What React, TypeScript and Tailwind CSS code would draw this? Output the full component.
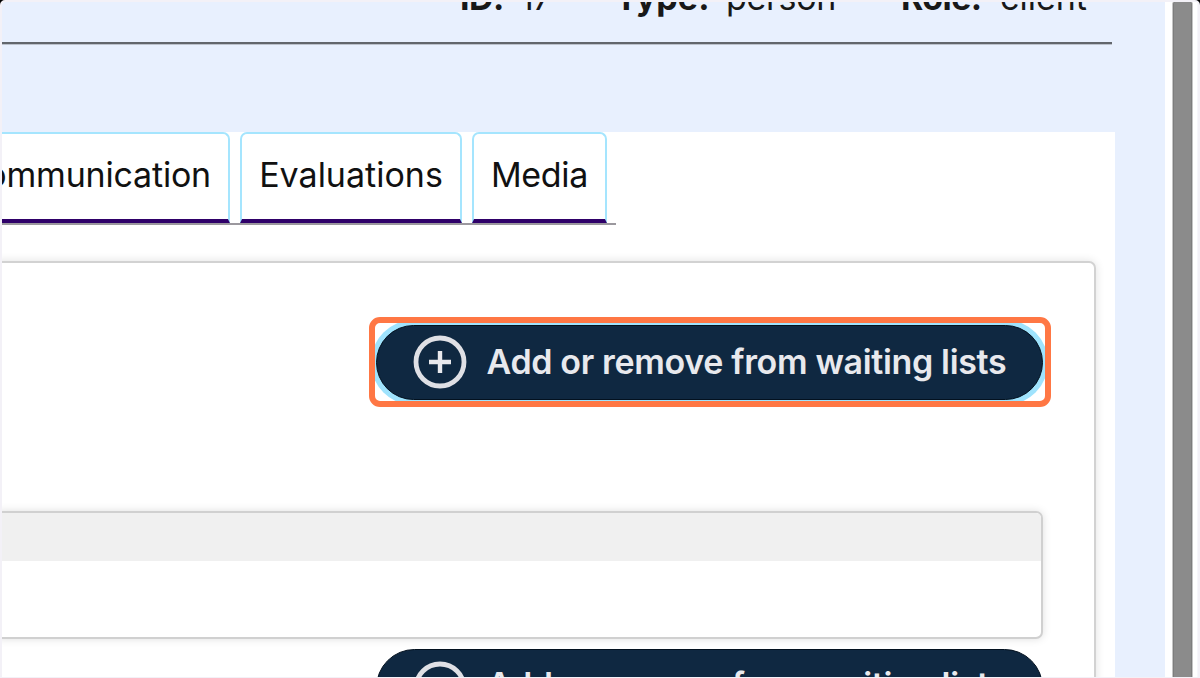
import React from "react";

function PlusCircle() {
  return (
    <svg width="54" height="54" viewBox="0 0 54 54" fill="none" className="shrink-0">
      <circle cx="27" cy="27" r="24" stroke="#dfe0e5" strokeWidth="4.8" />
      <path d="M27 16v22M16 27h22" stroke="#e9e9ed" strokeWidth="4.4" />
    </svg>
  );
}

function WaitingListButton({ focused = false }: { focused?: boolean }) {
  return (
    <button
      className={
        focused
          ? "mr-[2px] flex h-[75px] w-[667px] items-center rounded-full border border-[#03111f] bg-[#0f2841] pl-[36px] text-left shadow-[0_0_0_5px_#9fe3fd]"
          : "flex h-[77px] w-[667px] items-center rounded-full border border-[#03111f] bg-[#0f2841] pl-[36px] text-left"
      }
    >
      <PlusCircle />
      <span
        className={
          focused
            ? "-mt-[1px] ml-[20px] whitespace-nowrap text-[34px] leading-[40px] font-semibold tracking-[-0.34px] text-[#e8e9ed]"
            : "-mt-[6px] ml-[20px] whitespace-nowrap text-[34px] leading-[40px] font-semibold tracking-[-0.34px] text-[#e8e9ed]"
        }
      >
        Add or remove from waiting lists
      </span>
    </button>
  );
}

function Tab({ className, children }: { className: string; children: React.ReactNode }) {
  return (
    <div
      className={`flex h-[91px] shrink-0 items-center whitespace-nowrap border-x-2 border-t-2 border-b-4 border-x-[#a5e5fe] border-t-[#a5e5fe] border-b-[#2f0069] bg-white pb-[3px] text-[34px] leading-[40px] text-[#111] ${className}`}
    >
      {children}
    </div>
  );
}

export default function App() {
  return (
    <div className="h-[678px] w-[1200px] overflow-hidden bg-black font-['Inter','Liberation_Sans',sans-serif]">
      <div className="flex h-[678px] overflow-hidden rounded-t-[5px] border-x-2 border-t-2 border-b border-[#f3f1f7] bg-white">
        <main className="flex w-[1163px] shrink-0 flex-col overflow-hidden bg-[#e8f0fe]">
          <header className="flex h-[130px] shrink-0 flex-col">
            <div className="flex h-[42px] w-[1110px] overflow-hidden border-b-2 border-[#62666c] shadow-[0_1px_0_#bcc2cc]">
              <div className="-mt-[24px] flex h-[40px] whitespace-nowrap pl-[458px] text-[34px] leading-[40px] text-[#181818]">
                <b className="w-[60px] tracking-[-0.6px]">ID:</b>
                <span className="w-[95px] tracking-[-1px]">17</span>
                <b className="w-[111px] tracking-[0.1px]">Type:</b>
                <span className="w-[175px] tracking-[-0.3px]">person</span>
                <b className="w-[99px] tracking-[-0.6px]">Role:</b>
                <span className="tracking-[0px]">client</span>
              </div>
            </div>
          </header>
          <section className="h-[560px] w-[1113px] shrink-0 bg-white">
            <nav className="flex h-[93px] w-[614px] gap-[10px] overflow-hidden border-b-2 border-[#9b989e]">
              <Tab className="w-[228px] justify-end rounded-tr-[7px] border-l-0 pr-[17px] tracking-[-0.2px]">Communication</Tab>
              <Tab className="w-[222px] justify-center rounded-t-[7px]">Evaluations</Tab>
              <Tab className="w-[135px] justify-center rounded-t-[7px] tracking-[-0.3px]">Media</Tab>
            </nav>
            <div className="mt-[36px] -ml-[10px] flex h-[440px] w-[1104px] flex-col rounded-[7px] border-2 border-[#d2d2d2] bg-white pr-[43px] shadow-[0_0_10px_rgba(0,0,0,0.12)]">
              <div className="mt-[54px] flex h-[90px] w-[682px] shrink-0 items-center justify-center self-end overflow-hidden rounded-[11px] border-[6px] border-[#ff7744]">
                <WaitingListButton focused />
              </div>
              <div className="mt-[104px] mr-[8px] h-[128px] shrink-0 rounded-[7px] border-2 border-[#d0d0d0] bg-white shadow-[0_0_9px_rgba(0,0,0,0.13)]">
                <div className="h-[48px] rounded-tr-[5px] bg-[#f0f0f0]" />
              </div>
              <div className="mt-[10px] mr-[8px] shrink-0 self-end">
                <WaitingListButton />
              </div>
            </div>
          </section>
        </main>
        <aside className="flex flex-1 justify-between bg-white pl-[7px]">
          <div className="w-[21px] rounded-t-[2px] border-x border-[#c4c4c4] bg-[#8b8b8b] shadow-[inset_1px_0_#7d7d7d,inset_-1px_0_#7d7d7d]" />
          <div className="w-[1px] bg-[#f7f7fb]" />
        </aside>
      </div>
    </div>
  );
}
